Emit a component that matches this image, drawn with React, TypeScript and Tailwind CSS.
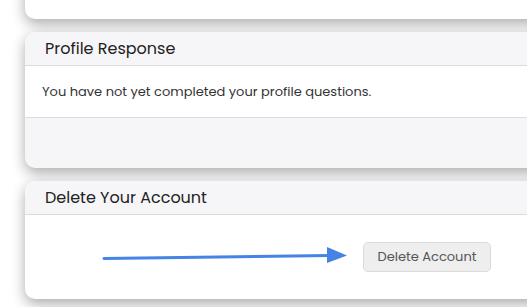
import React from "react";

const font = { fontFamily: "Poppins, Inter, 'Noto Sans', sans-serif" };

export default function App() {
  return (
    <div className="w-[527px] h-[307px] overflow-hidden bg-white relative" style={font}>
      <div className="flex flex-col gap-[13px] pl-[25px] mt-[-59px]">
        <div className="w-[540px] h-[78px] bg-white rounded-b-[10px] shadow-[0_5px_14px_rgba(0,0,0,0.33)]" />
        <div className="w-[540px] rounded-[10px] bg-[#f6f6f8] shadow-[0_5px_14px_rgba(0,0,0,0.33)] overflow-hidden">
          <div className="h-[34px] border-b border-[#dcdcdc] flex items-center pl-[20px] text-[16px] text-[#222]">
            Profile Response
          </div>
          <div className="h-[52px] bg-white border-b border-[#dcdcdc] flex items-center pl-[17px] text-[13px] text-[#333]">
            You have not yet completed your profile questions.
          </div>
          <div className="h-[50px]" />
        </div>
        <div className="w-[540px] rounded-[10px] bg-white shadow-[0_5px_14px_rgba(0,0,0,0.33)] overflow-hidden">
          <div className="h-[34px] bg-[#f6f6f8] border-b border-[#dcdcdc] flex items-center pl-[20px] text-[16px] text-[#222]">
            Delete Your Account
          </div>
          <div className="h-[84px] relative">
            <div className="absolute left-[338px] top-[27px] w-[128px] h-[30px] rounded-[5px] bg-[#eeeeee] border border-[#dadada] flex items-center justify-center text-[13px] text-[#555]">
              Delete Account
            </div>
            <svg className="absolute left-0 top-0" width="340" height="84">
              <line x1="79" y1="43.5" x2="305" y2="40.5" stroke="#4583e4" strokeWidth="3" strokeLinecap="round" />
              <polygon points="302,32 322,40.5 302,48" fill="#4583e4" />
            </svg>
          </div>
        </div>
      </div>
    </div>
  );
}
